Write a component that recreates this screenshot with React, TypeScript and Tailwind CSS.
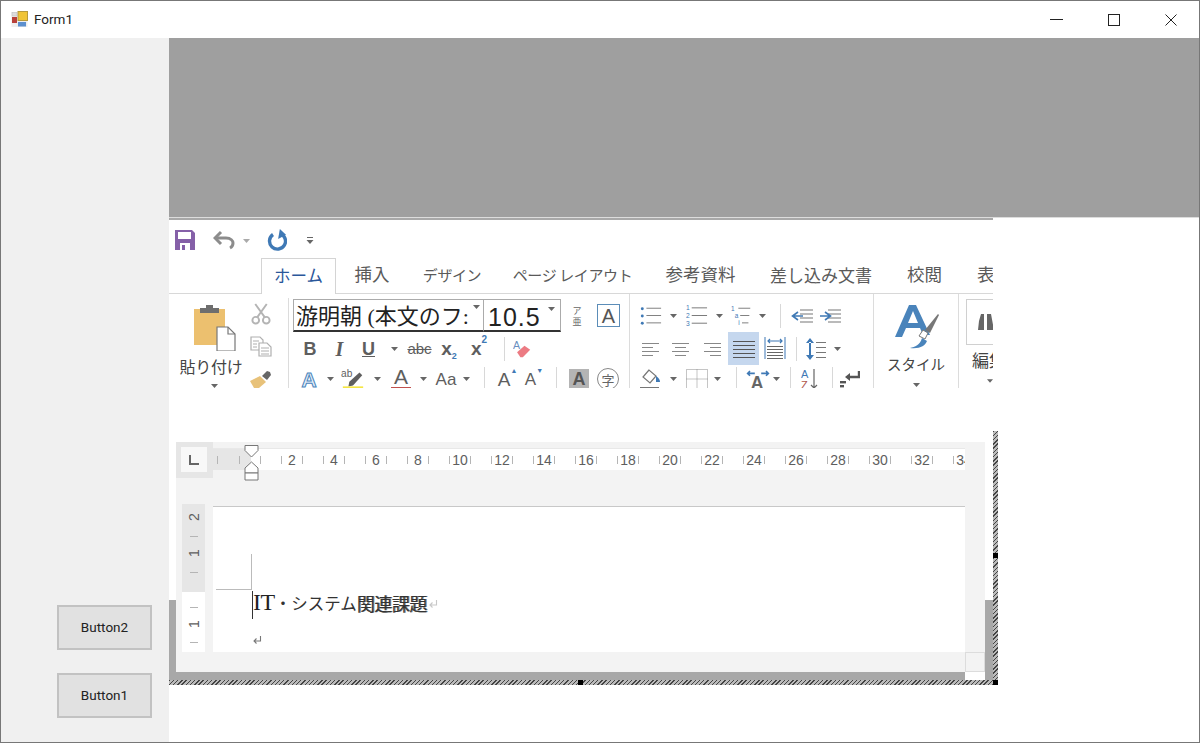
import React from "react";

const jp = "font-['Noto_Sans_CJK_JP',sans-serif]";
const ui = "font-['Roboto','Noto_Sans',sans-serif]";

function C({ className = "", children }: { className?: string; children?: React.ReactNode }) {
  return <div className={"flex items-center justify-center shrink-0 " + className}>{children}</div>;
}
function Caret({ color = "#666" }: { color?: string }) {
  return (
    <svg width="7" height="4" viewBox="0 0 7 4">
      <path d="M0 0h7L3.5 4z" fill={color} />
    </svg>
  );
}
function Sep({ className = "h-[24px]" }: { className?: string }) {
  return <div className={"w-px bg-[#d8d8d8] " + className} />;
}
function Lines({ kind }: { kind: "l" | "c" | "r" | "j" }) {
  const rows =
    kind === "l"
      ? [[0, 17], [0, 11], [0, 17], [0, 11]]
      : kind === "c"
      ? [[0, 17], [3, 14], [0, 17], [3, 14]]
      : kind === "r"
      ? [[0, 17], [6, 17], [0, 17], [6, 17]]
      : [[0, 22], [0, 22], [0, 22], [0, 22], [0, 22]];
  return (
    <svg width={kind === "j" ? 22 : 17} height="18" viewBox={kind === "j" ? "0 0 22 18" : "0 0 17 18"}>
      {rows.map((r, i) => (
        <rect key={i} x={r[0]} y={kind === "j" ? 1 + i * 4 : 3 + i * 4} width={r[1] - r[0]} height="1" fill={kind === "j" ? "#555" : "#888"} />
      ))}
    </svg>
  );
}
function FormIcon() {
  return (
    <svg width="17" height="17" viewBox="0 0 17 17">
      <rect x="0.5" y="1" width="16" height="15" fill="#eee" />
      <rect x="7" y="0.5" width="9.5" height="9" fill="#f0c437" stroke="#b79a3c" />
      <rect x="1" y="6" width="5" height="6" fill="#b8403a" />
      <rect x="7" y="11" width="8" height="4.5" fill="#5c8fce" />
      <rect x="1" y="1.5" width="5" height="3.5" fill="#ddd" stroke="#bbb" strokeWidth="0.5" />
    </svg>
  );
}
function SaveIcon() {
  return (
    <svg width="20" height="20" viewBox="0 0 20 20">
      <path d="M0 0h17l3 3v17H0z" fill="#8560a8" />
      <rect x="3" y="2" width="13" height="7" fill="#fff" />
      <rect x="5" y="13" width="10" height="7" fill="#fff" />
      <rect x="7" y="15" width="3" height="5" fill="#8560a8" />
    </svg>
  );
}
function Undo() {
  return (
    <svg width="23" height="20" viewBox="0 0 23 20" fill="none">
      <path d="M8 2 2 8l6 6" stroke="#8c8c8c" strokeWidth="3" />
      <path d="M3 8h10c5 0 7 3 7 5s-1 4-3 5" stroke="#8c8c8c" strokeWidth="3" />
    </svg>
  );
}
function Redo() {
  return (
    <svg width="22" height="22" viewBox="0 0 22 22" fill="none">
      <path d="M8 5.500a8 8 0 1 0 7-1" stroke="#3f79b5" strokeWidth="3.4" />
      <path d="M14 0v10l7-5.500z" fill="#3f79b5" transform="rotate(10 14 5)" />
    </svg>
  );
}
function QatMore() {
  return (
    <svg width="8" height="9" viewBox="0 0 8 9">
      <rect x="1" y="1" width="6" height="1" fill="#666" />
      <path d="M0.5 4h7L4 8z" fill="#666" />
    </svg>
  );
}
function Paste() {
  return (
    <svg width="42" height="46" viewBox="0 0 42 46">
      <path d="M0 4h31v36H0z" fill="#ecc06f" />
      <path d="M6 3h19v5H6z" fill="#6e6e6e" />
      <path d="M12 0h7v4h-7z" fill="#6e6e6e" />
      <path d="M23 22h11l7 7v17H23z" fill="#fff" stroke="#777" strokeWidth="1.2" />
      <path d="M34 22v7h7" fill="none" stroke="#777" strokeWidth="1.2" />
    </svg>
  );
}
function Scissors() {
  return (
    <svg width="20" height="23" viewBox="0 0 20 23" fill="none" stroke="#b4b4b4" strokeWidth="2">
      <path d="M4 1l10 14M16 1 6 15" />
      <circle cx="4.5" cy="18" r="3.5" />
      <circle cx="15.5" cy="18" r="3.5" />
    </svg>
  );
}
function Copy() {
  return (
    <svg width="22" height="21" viewBox="0 0 22 21" fill="#fff" stroke="#b0b0b0" strokeWidth="1.2">
      <path d="M1 1h9l3 3v10H1z" />
      <path d="M9 7h8l4 4v9H9z" />
      <path d="M3 5h6M3 8h4M3 11h4M11 12h8M11 15h8M11 18h8" />
    </svg>
  );
}
function Brush() {
  return (
    <svg width="22" height="18" viewBox="0 0 22 18">
      <path d="M0 11 10 6l6 6-7 6H4z" fill="#e8c27a" />
      <path d="M12 6l5-5 3 1 1 3-4 5z" fill="#666" />
    </svg>
  );
}
function Eraser() {
  return (
    <svg width="22" height="22" viewBox="0 0 22 22">
      <text x="0" y="11" fontSize="13" fill="#6a8fc0" fontFamily="Liberation Sans">A</text>
      <path d="M5 15 14 7l7 5-9 9H9z" fill="#ec7b83" />
    </svg>
  );
}
function Highlighter() {
  return (
    <svg width="26" height="22" viewBox="0 0 26 22">
      <text x="0" y="9" fontSize="11" fill="#5e5e5e" fontFamily="Liberation Sans">ab</text>
      <path d="M9 14 20 4l3 3-10 11-5 1z" fill="#5e5e5e" />
      <rect x="2" y="19" width="22" height="3" fill="#f5e642" />
    </svg>
  );
}
function ListIcon({ kind }: { kind: "b" | "n" | "m" }) {
  const dot = "#3f79b5";
  return (
    <svg width="24" height="22" viewBox="0 0 24 22">
      {[3, 11, 19].map((y, i) => (
        <g key={y}>
          <rect x={kind === "m" ? 8 + i * 2 : 7} y={y - 1} width={kind === "m" ? 13 - i * 3 : 16} height="1" fill="#777" />
          {kind === "b" && <circle cx="2.5" cy={y} r="1.6" fill={dot} />}
          {kind !== "b" && (
            <text x={kind === "m" ? i * 4 : 1} y={y + 2} fontSize="7" fill={dot} fontFamily="Liberation Sans">
              {kind === "n" ? i + 1 : ["1", "a", "i"][i]}
            </text>
          )}
        </g>
      ))}
    </svg>
  );
}
function IndentIcon({ dir }: { dir: "l" | "r" }) {
  return (
    <svg width="22" height="14" viewBox="0 0 22 14">
      {[1, 5, 9, 13].map((y) => (
        <rect key={y} x="9" y={y - 0.5} width="13" height="1" fill="#777" />
      ))}
      {dir === "l" ? (
        <path d="M7 3 1.500 7 7 11M2 7h10" stroke="#3f79b5" strokeWidth="1.6" fill="none" />
      ) : (
        <path d="M6 3l5.500 4L6 11M1 7h10" stroke="#3f79b5" strokeWidth="1.6" fill="none" />
      )}
    </svg>
  );
}
function Distribute() {
  return (
    <svg width="22" height="24" viewBox="0 0 22 24">
      <rect x="0.5" y="0" width="1" height="22" fill="#3f79b5" />
      <rect x="20.5" y="0" width="1" height="22" fill="#3f79b5" />
      <path d="M4 4h14M6 2 4 4l2 2M16 2l2 2-2 2" stroke="#3f79b5" strokeWidth="1.2" fill="none" />
      {[9, 12, 15, 18, 21].map((y) => (
        <rect key={y} x="3" y={y} width="16" height="1" fill="#666" />
      ))}
    </svg>
  );
}
function LineSpacing() {
  return (
    <svg width="21" height="24" viewBox="0 0 21 24">
      <path d="M5 1 1 6h8zM5 23 1 18h8zM4 5h2v14H4z" fill="#3f79b5" />
      {[5, 10, 15, 20].map((y) => (
        <rect key={y} x="11" y={y} width="10" height="1" fill="#777" />
      ))}
    </svg>
  );
}
function Bucket() {
  return (
    <svg width="22" height="22" viewBox="0 0 22 22" fill="none">
      <path d="M9 2 3 9l7 6 6-7z" fill="#fff" stroke="#777" strokeWidth="1.2" />
      <path d="M16 8c3 2 4 4 4 6h-4z" fill="#3f79b5" />
      <rect x="0" y="19" width="19" height="1.5" fill="#777" />
    </svg>
  );
}
function Borders() {
  return (
    <svg width="22" height="20" viewBox="0 0 22 20" fill="none" stroke="#8a8a8a" strokeDasharray="1 1">
      <path d="M.5.500h21v19H.5zM11 .5v19M.5 10h21" />
    </svg>
  );
}
function WideA() {
  return (
    <svg width="30" height="24" viewBox="0 0 30 24">
      <path d="M2 5h9M5 2 2 5l3 3M28 5h-9M25 2l3 3-3 3" stroke="#3f79b5" strokeWidth="2" fill="none" />
      <text x="6" y="24" fontSize="22" fontWeight="700" fill="#666" fontFamily="Liberation Sans">A</text>
    </svg>
  );
}
function Sort() {
  return (
    <svg width="20" height="22" viewBox="0 0 20 22">
      <text x="0" y="10" fontSize="11" fill="#3f79b5" fontFamily="Liberation Sans">A</text>
      <text x="0" y="21" fontSize="11" fill="#b0584c" fontFamily="Liberation Sans">Z</text>
      <path d="M13 1v19M10 17l3 3 3-3" stroke="#666" strokeWidth="1.2" fill="none" />
    </svg>
  );
}
function ReturnIcon() {
  return (
    <svg width="20" height="18" viewBox="0 0 20 18">
      <path d="M19 1v6H9" stroke="#555" strokeWidth="2.4" fill="none" />
      <path d="M10 3 5 7l5 4z" fill="#555" />
      <rect x="0" y="11" width="6" height="2.4" fill="#555" />
      <rect x="0" y="15" width="4" height="2.4" fill="#555" />
    </svg>
  );
}
function StyleIcon() {
  return (
    <svg width="46" height="44" viewBox="0 0 46 44">
      <path d="M16 0h7l14 30h-7l-3-7H13l-4 9H2zM15 18h10L20 6z" fill="#4a84bb" />
      <path d="M26 31l4-6 5 3-3 6z" fill="#fff" stroke="#777" />
      <path d="M32 25 45 9l1 1-9 18z" fill="#777" />
      <path d="M17 43c5-1 10-3 12-10l5 3c-2 5-7 8-17 7z" fill="#4a84bb" />
    </svg>
  );
}
function Binoculars() {
  return (
    <svg width="16" height="20" viewBox="0 0 16 20" fill="#666">
      <path d="M1 9l2-7h3v16H0zM9 2h4l3 16H9z" />
    </svg>
  );
}
function Indent() {
  return (
    <svg width="15" height="36" viewBox="0 0 15 36" fill="#fff" stroke="#777" strokeWidth="1">
      <path d="M1 .5h13v5L7.500 12 1 5.500z" />
      <path d="M7.500 17 14 23v5H1v-5z" />
      <path d="M1 28h13v7H1z" />
    </svg>
  );
}
function Mark() {
  return (
    <svg width="10" height="10" viewBox="0 0 10 10" fill="none" stroke="#777" strokeWidth="1.1">
      <path d="M8.500 1v5H2M4.500 3.500 2 6l2.500 2.500" />
    </svg>
  );
}

function Btn({ label }: { label: string }) {
  return (
    <div className={"w-[95px] h-[45px] bg-[#e1e1e1] border-2 border-[#c2c2c2] flex items-center justify-center text-[13.5px] text-[#222] " + ui}>
      {label}
    </div>
  );
}

function RulerCell({ n }: { n: number }) {
  return (
    <div className="w-[42px] h-full flex items-center justify-center shrink-0 relative">
      <span className="w-px h-[8px] bg-[#b5b5b5] shrink-0" />
      <span className="w-[20px] text-center shrink-0 text-[14px] text-[#5e5e5e] font-['Liberation_Sans',sans-serif] leading-none whitespace-nowrap flex justify-center">
        {n > 0 ? n : ""}
      </span>
      <span className="w-px h-[8px] bg-[#b5b5b5] shrink-0" />
    </div>
  );
}

function VTick({ className }: { className: string }) {
  return (
    <div className={"flex items-center justify-center w-full " + className}>
      <span className="w-[8px] h-px bg-[#b5b5b5]" />
    </div>
  );
}
function VNum({ n, className }: { n: number; className: string }) {
  return (
    <div className={"flex items-center justify-center w-full " + className}>
      <span className="-rotate-90 text-[14px] leading-none text-[#5e5e5e] font-['Liberation_Sans',sans-serif]">{n}</span>
    </div>
  );
}

export default function App() {
  const rulerNums = [0, 2, 4, 6, 8, 10, 12, 14, 16, 18, 20, 22, 24, 26, 28, 30, 32, 34];
  const hatch = "bg-[repeating-linear-gradient(135deg,#444_0px,#444_1px,#bbb_1px,#bbb_3px)]";
  const tab = "text-[17.5px] text-[#5a5a5a] whitespace-nowrap leading-none " + jp;
  const kana = "text-[15px] tracking-[-0.4px] text-[#5a5a5a] whitespace-nowrap leading-none " + jp;
  const mini = "font-['Liberation_Sans',sans-serif] text-[#5e5e5e] leading-none";
  return (
    <div className="w-[1200px] h-[743px] border border-[#777] bg-white flex flex-col overflow-hidden relative">
      {/* title bar */}
      <div className="h-[37px] flex items-center shrink-0">
        <div className="ml-[10px] mr-[6px] flex"><FormIcon /></div>
        <span className={"text-[13.5px] text-[#222] " + ui}>Form1</span>
        <div className="ml-auto flex items-center pr-[22px] gap-[44px]">
          <div className="w-[13px] h-px bg-[#222]" />
          <div className="w-[12px] h-[12px] border border-[#222] mx-[1px]" />
          <svg width="12" height="12" viewBox="0 0 12 12" stroke="#222" fill="none">
            <path d="M.5.500l11 11M11.500.500l-11 11" />
          </svg>
        </div>
      </div>
      <div className="flex flex-1 min-h-0">
        {/* sidebar */}
        <div className="w-[168px] shrink-0 bg-[#f0f0f0] flex flex-col justify-end items-end pr-[17px] pb-[24px] gap-[23px]">
          <Btn label="Button2" />
          <Btn label="Button1" />
        </div>
        {/* main */}
        <div className="flex-1 min-w-0 flex flex-col">
          <div className="h-[180px] shrink-0 bg-[#9f9f9f] border-b border-[#dcdcdc]" />
          {/* ribbon */}
          <div className="w-[824px] h-[213px] shrink-0 border-t-2 border-[#a8a8a8] overflow-hidden flex flex-col">
            <div className="h-[38px] shrink-0 flex items-center pl-[6px] pt-[2px]">
              <C className="w-[20px]"><SaveIcon /></C>
              <C className="w-[23px] ml-[18px]"><Undo /></C>
              <C className="w-[10px] ml-[5px] mt-[1px]"><Caret color="#aaa" /></C>
              <C className="w-[22px] ml-[14px]"><Redo /></C>
              <C className="w-[10px] ml-[18px]"><QatMore /></C>
            </div>
            <div className="h-[36px] shrink-0 flex border-b border-[#d8d8d8] pl-[92px]">
              <div className="w-[75px] h-[36px] bg-white border border-b-0 border-[#d4d4d4] flex items-center justify-center shrink-0 pb-[3px]">
                <span className={"text-[16.5px] whitespace-nowrap leading-none text-[#2b579a] " + jp}>ホーム</span>
              </div>
              <C className="w-[36px] ml-[18px] pb-[3px]"><span className={tab}>挿入</span></C>
              <C className="w-[56px] ml-[34px] pb-[3px]"><span className={kana}>デザイン</span></C>
              <C className="w-[117px] ml-[34px] pb-[3px]"><span className={kana}>ページ レイアウト</span></C>
              <C className="w-[71px] ml-[34px] pb-[3px]"><span className={tab}>参考資料</span></C>
              <C className="w-[100px] ml-[35px] pb-[3px]"><span className={"text-[17px] text-[#5a5a5a] whitespace-nowrap leading-none " + jp}>差し込み文書</span></C>
              <C className="w-[35px] ml-[36px] pb-[3px]"><span className={tab}>校閲</span></C>
              <C className="w-[16px] ml-[35px] pb-[3px] !justify-start"><span className={tab}>表</span></C>
            </div>
            <div className="h-[94px] shrink-0 flex overflow-hidden">
              {/* clipboard */}
              <div className="w-[120px] shrink-0 border-r border-[#dcdcdc] flex mt-[4px]">
                <div className="w-[81px] shrink-0 flex flex-col items-center">
                  <div className="mt-[7px] ml-[10px] flex"><Paste /></div>
                  <span className={"mt-[5px] ml-[3px] text-[16px] leading-[20px] text-[#444] whitespace-nowrap tracking-[-0.3px] " + jp}>貼り付け</span>
                  <div className="mt-[8px] ml-[10px] flex"><Caret /></div>
                </div>
                <div className="flex flex-col items-center w-[21px] pt-[5px]">
                  <Scissors />
                  <div className="mt-[11px] flex"><Copy /></div>
                  <div className="mt-[13px] flex"><Brush /></div>
                </div>
              </div>
              {/* font */}
              <div className="w-[341px] shrink-0 border-r border-[#dcdcdc] pt-[5px] flex flex-col">
                <div className="h-[33px] flex pl-[4px] shrink-0">
                  <div className="w-[191px] h-[33px] border border-[#ababab] border-b-2 border-b-[#333] flex items-center relative overflow-hidden shrink-0 pt-[4px]">
                    <span className="pl-[2px] text-[22px] text-[#222] whitespace-nowrap leading-none font-['Liberation_Serif','Noto_Sans_CJK_JP',serif]">游明朝 (本文のフ:</span>
                    <div className="absolute right-[3px] top-[5px] flex bg-white pl-[3px]"><Caret /></div>
                  </div>
                  <div className="w-[77px] h-[33px] border border-l-0 border-[#ababab] border-b-2 border-b-[#333] flex items-center relative shrink-0 pt-[4px]">
                    <span className="pl-[4px] text-[25px] text-[#222] tracking-[1px] leading-none font-['Liberation_Sans',sans-serif]">10.5</span>
                    <div className="absolute right-[5px] top-[7px] flex"><Caret /></div>
                  </div>
                  <C className="w-[32px] h-[33px]">
                    <div className={"flex flex-col items-center text-[9px] leading-[11px] text-[#666] " + jp}>
                      <span>ア</span>
                      <span>亜</span>
                    </div>
                  </C>
                  <C className="w-[31px] h-[33px]">
                    <div className="w-[23px] h-[23px] border border-[#5b8db8] flex items-center justify-center text-[20px] leading-none text-[#555] font-['Liberation_Sans',sans-serif]">A</div>
                  </C>
                </div>
                <div className="h-[33px] flex items-center pl-[7px] shrink-0">
                  <C className="w-[28px]"><span className={mini + " text-[18px] font-bold"}>B</span></C>
                  <C className="w-[31px]"><span className="text-[20px] font-bold italic text-[#5e5e5e] leading-none font-['Liberation_Serif',serif]">I</span></C>
                  <C className="w-[27px]"><span className={mini + " text-[18px] font-bold underline"}>U</span></C>
                  <C className="w-[24px]"><Caret /></C>
                  <C className="w-[27px]"><span className={mini + " text-[15px] line-through"}>abc</span></C>
                  <C className="w-[32px]"><span className={mini + " text-[19px] font-bold"}>x<sub className="text-[9px] text-[#3f79b5] align-[-2px]">2</sub></span></C>
                  <C className="w-[28px]"><span className={mini + " text-[19px] font-bold"}>x<sup className="text-[10px] text-[#3f79b5] align-[7px]">2</sup></span></C>
                  <C className="w-[22px]"><Sep /></C>
                  <C className="w-[18px] ml-[-2px]"><Eraser /></C>
                </div>
                <div className="h-[28px] flex items-center pl-[10px] shrink-0">
                  <C className="w-[20px]"><span className="text-[21px] font-bold leading-none text-[#e4eef8] [-webkit-text-stroke:1px_#4a84bb] font-['Liberation_Sans',sans-serif]">A</span></C>
                  <C className="w-[22px]"><Caret /></C>
                  <C className="w-[24px]"><Highlighter /></C>
                  <C className="w-[25px]"><Caret /></C>
                  <C className="w-[22px]">
                    <div className="flex flex-col items-center -mt-[3px]">
                      <span className={mini + " text-[21px]"}>A</span>
                      <span className="w-[20px] h-[2px] bg-[#c0504d]" />
                    </div>
                  </C>
                  <C className="w-[23px]"><Caret /></C>
                  <C className="w-[22px]"><span className={mini + " text-[17px]"}>Aa</span></C>
                  <C className="w-[18px]"><Caret /></C>
                  <C className="w-[19px]"><Sep /></C>
                  <C className="w-[27px]"><span className={mini + " text-[19px]"}>A<sup className="text-[7px] text-[#3f79b5] align-[9px]">▲</sup></span></C>
                  <C className="w-[26px]"><span className={mini + " text-[17px]"}>A<sup className="text-[7px] text-[#3f79b5] align-[8px]">▼</sup></span></C>
                  <C className="w-[19px]"><Sep /></C>
                  <C className="w-[26px]">
                    <div className="w-[20px] h-[20px] bg-[#b4b4b4] flex items-center justify-center text-[18px] leading-none font-bold text-[#555] font-['Liberation_Sans',sans-serif]">A</div>
                  </C>
                  <C className="w-[32px]">
                    <div className={"w-[22px] h-[22px] rounded-full border border-[#888] flex items-center justify-center text-[13px] leading-none text-[#666] " + jp}>字</div>
                  </C>
                </div>
              </div>
              {/* paragraph */}
              <div className="w-[244px] shrink-0 border-r border-[#dcdcdc] pt-[5px] flex flex-col">
                <div className="h-[33px] flex items-center pl-[10px] shrink-0">
                  <C className="w-[22px]"><ListIcon kind="b" /></C>
                  <C className="w-[23px]"><Caret /></C>
                  <C className="w-[23px]"><ListIcon kind="n" /></C>
                  <C className="w-[23px]"><Caret /></C>
                  <C className="w-[22px]"><ListIcon kind="m" /></C>
                  <C className="w-[18px]"><Caret /></C>
                  <C className="w-[18px]"><Sep /></C>
                  <C className="w-[26px]"><IndentIcon dir="l" /></C>
                  <C className="w-[30px]"><IndentIcon dir="r" /></C>
                </div>
                <div className="h-[33px] flex items-center pl-[5px] shrink-0">
                  <C className="w-[30px]"><Lines kind="l" /></C>
                  <C className="w-[31px]"><Lines kind="c" /></C>
                  <C className="w-[32px]"><Lines kind="r" /></C>
                  <C className="w-[31px] h-[33px] bg-[#c5d7ee]"><Lines kind="j" /></C>
                  <C className="w-[32px]"><Distribute /></C>
                  <C className="w-[10px]"><Sep /></C>
                  <C className="w-[28px]"><LineSpacing /></C>
                  <C className="w-[16px]"><Caret /></C>
                </div>
                <div className="h-[28px] flex items-center pl-[9px] shrink-0">
                  <C className="w-[23px]"><Bucket /></C>
                  <C className="w-[23px]"><Caret /></C>
                  <C className="w-[23px]"><Borders /></C>
                  <C className="w-[18px]"><Caret /></C>
                  <C className="w-[20px]"><Sep /></C>
                  <C className="w-[24px]"><WideA /></C>
                  <C className="w-[12px]"><Caret /></C>
                  <C className="w-[16px]"><Sep /></C>
                  <C className="w-[26px]"><Sort /></C>
                  <C className="w-[16px]"><Sep /></C>
                  <C className="w-[20px]"><ReturnIcon /></C>
                </div>
              </div>
              {/* styles */}
              <div className="w-[85px] shrink-0 border-r border-[#dcdcdc] flex flex-col items-center pt-[11px]">
                <StyleIcon />
                <span className={"mt-[4px] text-[14.5px] leading-[22px] text-[#444] whitespace-nowrap " + jp}>スタイル</span>
                <div className="mt-[8px] flex"><Caret /></div>
              </div>
              {/* editing */}
              <div className="flex-1 min-w-0 pl-[7px] pt-[5px] flex flex-col overflow-hidden">
                <div className="w-[40px] h-[46px] border border-[#d0d0d0] flex items-center pl-[11px] shrink-0"><Binoculars /></div>
                <span className={"mt-[4px] ml-[6px] text-[17px] leading-[22px] text-[#444] whitespace-nowrap " + jp}>編集</span>
                <div className="mt-[8px] ml-[21px] flex"><Caret /></div>
              </div>
            </div>
          </div>

          {/* hosted document */}
          <div className="w-[829px] h-[254px] shrink-0 flex relative">
            <div className="w-[824px] shrink-0 flex flex-col">
              <div className="h-[249px] shrink-0 flex pt-[11px]">
                <div className="w-[7px] shrink-0 flex flex-col justify-end">
                  <div className="h-[80px] bg-[#a8a8a8]" />
                </div>
                <div className="w-[809px] shrink-0 flex flex-col">
                  <div className="h-[230px] shrink-0 bg-[#f3f3f3] flex">
                    {/* left col */}
                    <div className="w-[37px] shrink-0 flex flex-col">
                      <div className="h-[36px] bg-[#e6e6e6] p-[5px] flex shrink-0">
                        <div className="w-[26px] h-[25px] bg-[#f8f8f8] flex items-center justify-center">
                          <svg width="12" height="12" viewBox="0 0 12 12" fill="none" stroke="#666" strokeWidth="2">
                            <path d="M2 1v9h9" />
                          </svg>
                        </div>
                      </div>
                      <div className="w-[23px] ml-[6px] mt-[26px] h-[148px] flex flex-col shrink-0 overflow-hidden">
                        <div className="h-[88px] bg-[#e6e6e6] flex flex-col shrink-0">
                          <VNum n={2} className="h-[26px]" />
                          <VTick className="h-[12px]" />
                          <VNum n={1} className="h-[22px]" />
                          <VTick className="h-[16px]" />
                        </div>
                        <div className="h-[60px] bg-white flex flex-col shrink-0 pt-[8px]">
                          <VTick className="h-[16px]" />
                          <VNum n={1} className="h-[18px]" />
                          <VTick className="h-[20px]" />
                        </div>
                      </div>
                    </div>
                    {/* right col */}
                    <div className="w-[752px] shrink-0 flex flex-col">
                      <div className="h-[64px] shrink-0 pt-[6px]">
                        <div className="h-[22px] bg-white border-t border-[#e8e8e8] flex overflow-hidden relative">
                          <div className="w-[16px] shrink-0 flex items-center bg-[#e6e6e6]">
                            <span className="ml-[4px] w-px h-[8px] bg-[#b5b5b5]" />
                          </div>
                          <div className="flex shrink-0 relative">
                            <div className="absolute left-0 top-0 bottom-0 w-[22px] bg-[#e6e6e6]" />
                            {rulerNums.map((n) => (
                              <RulerCell key={n} n={n} />
                            ))}
                          </div>
                        </div>
                      </div>
                      <div className="h-[146px] bg-white border-t border-[#c8c8c8] shrink-0 relative pl-[40px] pt-[82px]">
                        <div className="absolute left-[3px] top-[82px] w-[36px] h-px bg-[#bbb]" />
                        <div className="absolute left-[38px] top-[47px] w-px h-[36px] bg-[#bbb]" />
                        <div className="absolute left-[39px] top-[84px] w-px h-[28px] bg-[#333]" />
                        <div className="flex items-end h-[26px] whitespace-nowrap">
                          <span className="text-[24px] leading-[26px] text-[#222] tracking-[-0.5px] font-['Liberation_Serif',serif]">IT</span>
                          <span className={"text-[16.5px] leading-[24px] text-[#333] " + jp}>・システム</span>
                          <span className={"text-[18px] leading-[24px] text-[#333] tracking-[-0.5px] [text-shadow:1px_0_#777] " + jp}>関連課題</span>
                          <span className="ml-[1px] mb-[6px] flex opacity-40"><Mark /></span>
                        </div>
                        <div className="mt-[20px] flex -ml-[1px]"><Mark /></div>
                      </div>
                    </div>
                  </div>
                  <div className="h-[8px] shrink-0 flex">
                    <div className="w-[789px] bg-[#a8a8a8]" />
                  </div>
                </div>
                <div className="w-[8px] shrink-0 flex flex-col justify-end">
                  <div className="h-[80px] bg-[#a8a8a8]" />
                </div>
              </div>
              <div className={"h-[5px] shrink-0 " + hatch} />
            </div>
            <div className={"w-[5px] shrink-0 " + hatch} />
            {/* scrollbar corner */}
            <div className="absolute left-[796px] top-[221px] w-[20px] h-[20px] bg-[#f3f3f3] border border-[#dcdcdc]" />
            {/* indent markers */}
            <div className="absolute left-[75px] top-[14px] flex"><Indent /></div>
            {/* handles */}
            <div className="absolute right-0 top-[122px] w-[5px] h-[5px] bg-black" />
            <div className="absolute left-[409px] bottom-0 w-[5px] h-[5px] bg-black" />
            <div className="absolute right-0 bottom-0 w-[5px] h-[5px] bg-black" />
          </div>
        </div>
      </div>
    </div>
  );
}
